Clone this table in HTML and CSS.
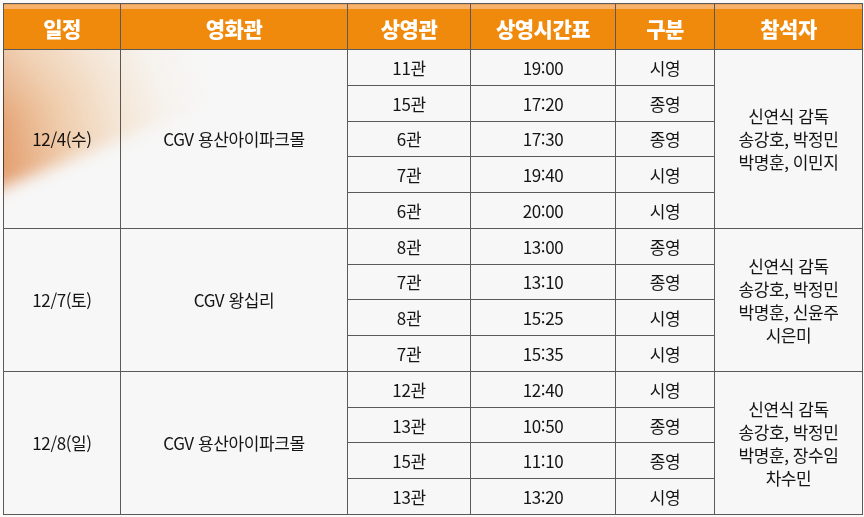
FILE: index.html
```html
<!DOCTYPE html>
<html lang="ko">
<head>
<meta charset="utf-8">
<link rel="stylesheet" href="styles.css">
</head>
<body>
<div class="sheet">
  <div class="glow-area"><div class="glow-soft"><div class="glow"></div></div></div>
  <div class="h">일정</div>
  <div class="h">영화관</div>
  <div class="h">상영관</div>
  <div class="h">상영시간표</div>
  <div class="h">구분</div>
  <div class="h">참석자</div>

  <div class="cell span5">12/4(수)</div>
  <div class="cell span5">CGV 용산아이파크몰</div>
  <div class="cell">11관</div><div class="cell">19:00</div><div class="cell">시영</div>
  <div class="cell span5 people">신연식 감독<br>송강호, 박정민<br>박명훈, 이민지</div>
  <div class="cell">15관</div><div class="cell">17:20</div><div class="cell">종영</div>
  <div class="cell">6관</div><div class="cell">17:30</div><div class="cell">종영</div>
  <div class="cell">7관</div><div class="cell">19:40</div><div class="cell">시영</div>
  <div class="cell">6관</div><div class="cell">20:00</div><div class="cell">시영</div>

  <div class="cell span4">12/7(토)</div>
  <div class="cell span4">CGV 왕십리</div>
  <div class="cell">8관</div><div class="cell">13:00</div><div class="cell">종영</div>
  <div class="cell span4 people">신연식 감독<br>송강호, 박정민<br>박명훈, 신윤주<br>시은미</div>
  <div class="cell">7관</div><div class="cell">13:10</div><div class="cell">종영</div>
  <div class="cell">8관</div><div class="cell">15:25</div><div class="cell">시영</div>
  <div class="cell">7관</div><div class="cell">15:35</div><div class="cell">시영</div>

  <div class="cell span4">12/8(일)</div>
  <div class="cell span4">CGV 용산아이파크몰</div>
  <div class="cell">12관</div><div class="cell">12:40</div><div class="cell">시영</div>
  <div class="cell span4 people">신연식 감독<br>송강호, 박정민<br>박명훈, 장수임<br>차수민</div>
  <div class="cell">13관</div><div class="cell">10:50</div><div class="cell">종영</div>
  <div class="cell">15관</div><div class="cell">11:10</div><div class="cell">종영</div>
  <div class="cell">13관</div><div class="cell">13:20</div><div class="cell">시영</div>
</div>
</body>
</html>
```
FILE: styles.css
```css
html, body {
  margin: 0;
  padding: 0;
  background: #fbfaf8;
}
body {
  padding: 3px 0 0 3px;
  font-family: "Noto Sans CJK KR", "Noto Sans", sans-serif;
  color: #151515;
}
.sheet {
  position: relative;
  display: grid;
  grid-template-columns: 116px 226px 122px 144px 98px 147px;
  grid-template-rows: 45px repeat(13, 1fr);
  gap: 1px;
  padding: 1px;
  width: 860px;
  height: 512px;
  box-sizing: border-box;
  background: #5a5a5a;
  overflow: hidden;
}
.h {
  background: #f08a0c;
  box-shadow: inset 0 1px 0 #e9a25a, inset 0 5px 0 #f6b26a;
  color: #fff;
  font-weight: 900;
  font-size: 21px;
  letter-spacing: -0.5px;
  display: flex;
  align-items: center;
  justify-content: center;
  padding-top: 3px;
  box-sizing: border-box;
}
.cell {
  background: #f7f7f7;
  font-size: 17px;
  letter-spacing: -0.4px;
  display: flex;
  align-items: center;
  justify-content: center;
  text-align: center;
}
.span5 { grid-row: span 5; }
.span4 { grid-row: span 4; }
.people {
  line-height: 23px;
}
.glow-area {
  position: absolute;
  left: 0;
  top: 47px;
  width: 220px;
  height: 175px;
  overflow: hidden;
  mix-blend-mode: multiply;
  pointer-events: none;
  z-index: 2;
}
.glow-soft {
  position: absolute;
  inset: 0;
  filter: blur(8px);
}
.glow {
  position: absolute;
  left: -80px;
  top: -124px;
  width: 320px;
  height: 220px;
  background: linear-gradient(90deg,
    rgba(222,112,42,0.82) 0%,
    rgba(228,128,58,0.72) 14%,
    rgba(240,170,105,0.55) 32%,
    rgba(248,208,162,0.4) 50%,
    rgba(252,232,210,0.22) 66%,
    rgba(255,255,255,0) 82%);
  -webkit-mask-image: linear-gradient(to bottom, rgba(0,0,0,0.75) 40%, #000 72%, rgba(0,0,0,0.9) 100%);
  mask-image: linear-gradient(to bottom, rgba(0,0,0,0.75) 40%, #000 72%, rgba(0,0,0,0.9) 100%);
  transform: rotate(-22deg);
}
```
